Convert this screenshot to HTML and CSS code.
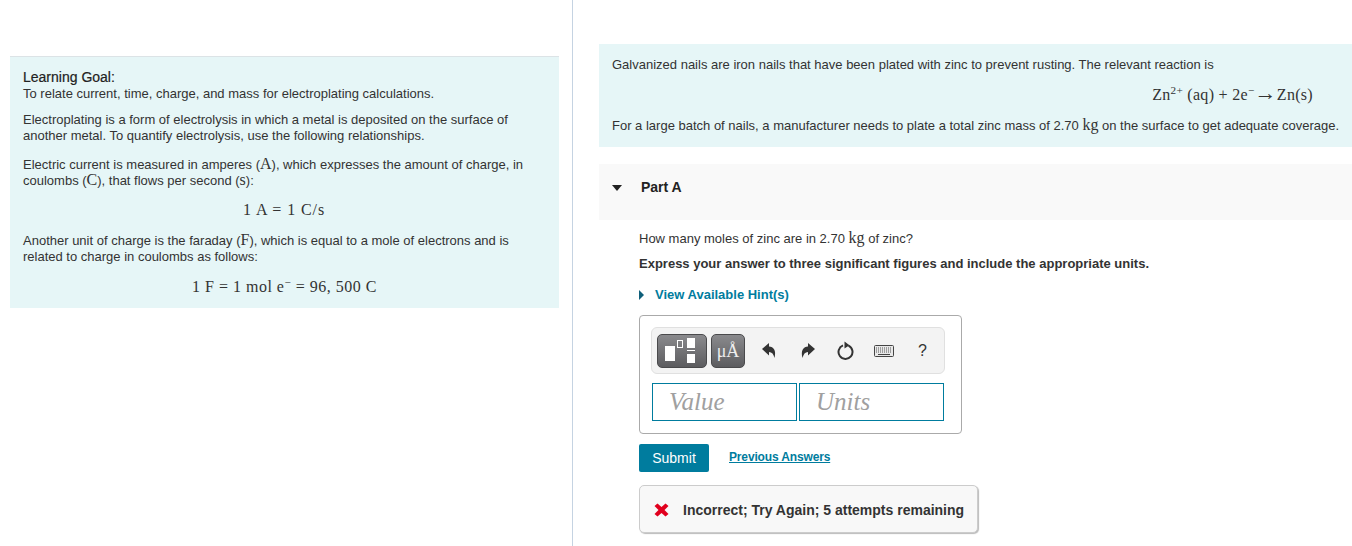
FILE: index.html
```html
<!DOCTYPE html>
<html lang="en">

<head>
    <meta charset="UTF-8">
    <title>Learning Goal</title>
    <link rel="stylesheet" href="styles.css">
</head>

<body>
    <div class="left">
        <div class="goal">
            <p class="first"><b class="goal-title">Learning Goal:</b><br>To relate current, time, charge, and mass for electroplating calculations.</p>
            <p>Electroplating is a form of electrolysis in which a metal is deposited on the surface of<br>another metal. To quantify electrolysis, use the following relationships.</p>
            <p class="current">Electric current is measured in amperes (<span class="m">A</span>), which expresses the amount of charge, in<br>coulombs (<span class="m">C</span>), that flows per second (<span class="m">s</span>):</p>
            <div class="eq eq-a"><span class="m">1 A = 1 C/s</span></div>
            <p class="faraday">Another unit of charge is the faraday (<span class="m">F</span>), which is equal to a mole of electrons and is<br>related to charge in coulombs as follows:</p>
            <div class="eq eq-f"><span class="m">1 F = 1 mol e<sup>−</sup> = 96, 500 C</span></div>
        </div>
    </div>

    <div class="right">
        <div class="intro">
            <p>Galvanized nails are iron nails that have been plated with zinc to prevent rusting. The relevant reaction is</p>
            <div class="reaction"><span class="m">Zn<sup>2+</sup> (aq) + 2e<sup>−</sup><span class="rarr">→</span>Zn(s)</span></div>
            <p>For a large batch of nails, a manufacturer needs to plate a total zinc mass of 2.70 <span class="m">kg</span> on the surface to get adequate coverage.</p>
        </div>

        <div class="part-head">
            <span class="arrow-down"></span>
            <b>Part A</b>
        </div>

        <div class="part-body">
            <p class="question">How many moles of zinc are in 2.70 <span class="m">kg</span> of zinc?</p>
            <p class="express">Express your answer to three significant figures and include the appropriate units.</p>
            <a class="hints" href="#"><span class="arrow-right"></span>View Available Hint(s)</a>

            <div class="answer">
                <div class="toolbar">
                    <span class="tpl tpl-frac">
                        <svg width="48" height="32" viewBox="0 0 48 32">
                            <rect x="7" y="11" width="10" height="15" fill="#fff"/>
                            <rect x="19.5" y="5.5" width="5" height="7" fill="none" stroke="#fff"/>
                            <rect x="29" y="3" width="8" height="10" fill="#fff"/>
                            <rect x="29" y="15" width="8" height="1" fill="#fff"/>
                            <rect x="29" y="19" width="8" height="9" fill="#fff"/>
                        </svg>
                    </span>
                    <span class="tpl tpl-unit">μÅ</span>
                    <svg class="tool tool-undo" width="16" height="18" viewBox="0 0 16 18">
                        <path d="M1 7 L8 1 V4.5 C12.5 4.5 15.5 8.5 13.5 16 C12.5 12 11 10 8 10 V13.5 Z" fill="#333"/>
                    </svg>
                    <svg class="tool tool-redo" width="16" height="18" viewBox="0 0 16 18">
                        <path d="M15 7 L8 1 V4.5 C3.5 4.5 0.5 8.5 2.5 16 C3.5 12 5 10 8 10 V13.5 Z" fill="#333"/>
                    </svg>
                    <svg class="tool tool-reset" width="18" height="20" viewBox="0 0 18 20">
                        <path d="M11.5 4.6 A7 7 0 1 1 6 4.4" fill="none" stroke="#333" stroke-width="2"/>
                        <path d="M7.5 0.5 L12.5 4.2 L7.5 7.5 Z" fill="#333"/>
                    </svg>
                    <svg class="tool tool-keys" width="20" height="12" viewBox="0 0 20 12">
                        <rect x="0.5" y="0.5" width="19" height="11" rx="1" fill="#e8e8e8" stroke="#444"/>
                        <path d="M2 3 H18 M2 5 H18 M2 7 H18" stroke="#555" stroke-dasharray="1 1"/>
                        <path d="M4 9.5 H16" stroke="#444"/>
                    </svg>
                    <span class="tool-help">?</span>
                </div>
                <div class="inputs">
                    <div class="field">Value</div>
                    <div class="field">Units</div>
                </div>
            </div>

            <div class="actions">
                <a class="submit" href="#">Submit</a>
                <a class="prev" href="#">Previous Answers</a>
            </div>

            <div class="feedback">
                <svg width="15" height="14" viewBox="0 0 15 14">
                    <path d="M3.5 0.5 L7.5 4 L11.5 0.5 L14.5 3 L10.5 7 L14.5 11 L11.5 13.5 L7.5 10 L3.5 13.5 L0.5 11 L4.5 7 L0.5 3 Z" fill="#e1001e"/>
                </svg>
                <span>Incorrect; Try Again; 5 attempts remaining</span>
            </div>
        </div>
    </div>
</body>

</html>
```

FILE: styles.css
```css
* {
    margin: 0;
    padding: 0;
    box-sizing: border-box;
}

html,
body {
    height: 546px;
    overflow: hidden;
}

body {
    display: flex;
    font-family: "Liberation Sans", Arial, sans-serif;
    font-size: 13px;
    line-height: 16px;
    color: #333;
    background: #fff;
}

sup {
    font-size: 70%;
    line-height: 0;
}

.m {
    font-family: "Liberation Serif", "Times New Roman", serif;
    font-size: 16px;
    line-height: 0;
}

.left {
    width: 573px;
    flex: none;
    height: 546px;
    padding: 56px 13px 0 10px;
    border-right: 1px solid #c5d3e2;
}

.goal {
    height: 252px;
    padding: 13px 13px 0;
    background: #e6f6f7;
    border-top: 1px solid #dce3e6;
}

.goal p {
    margin-top: 10px;
}

.goal p.first {
    margin-top: 0;
}

.goal p.current {
    margin-top: 13px;
}

.goal p.faraday {
    margin-top: 14px;
}

.goal-title {
    font-size: 14px;
    line-height: 0;
    font-weight: normal;
    color: #222;
    -webkit-text-stroke: 0.2px #222;
}

.eq {
    text-align: center;
}

.eq-a {
    margin-top: 14px;
    padding-right: 1px;
    letter-spacing: 0.9px;
}

.eq-f {
    margin-top: 15px;
    letter-spacing: 0.5px;
}

.right {
    flex: 1;
    min-width: 0;
    padding: 44px 0 0 26px;
}

.intro {
    height: 103px;
    padding: 13px 0 0 13px;
    background: #e6f6f7;
    white-space: nowrap;
}

.reaction {
    margin-top: 12px;
    padding-right: 39px;
    text-align: right;
    height: 22px;
    line-height: 22px;
    letter-spacing: 0.3px;
}

.rarr {
    font-size: 22px;
}

.reaction+p {
    margin-top: 11px;
}

.part-head {
    display: flex;
    align-items: flex-start;
    height: 56px;
    margin-top: 17px;
    padding: 15px 0 0 13px;
    background: #f9f9f9;
    font-size: 14px;
}

.part-head b {
    color: #222;
    margin-left: 19px;
}

.arrow-down {
    width: 0;
    height: 0;
    margin-top: 6px;
    border-left: 5px solid transparent;
    border-right: 5px solid transparent;
    border-top: 6px solid #222;
}

.part-body {
    padding: 11px 0 0 40px;
}

.express {
    margin-top: 9px;
    font-weight: bold;
    color: #333;
}

.hints {
    display: flex;
    align-items: center;
    margin-top: 15px;
    font-weight: bold;
    color: #007c9e;
    text-decoration: none;
}

.arrow-right {
    width: 0;
    height: 0;
    margin-right: 11px;
    border-top: 5px solid transparent;
    border-bottom: 5px solid transparent;
    border-left: 5px solid #0f5f7a;
}

.answer {
    width: 323px;
    height: 119px;
    margin-top: 12px;
    padding: 11px 0 0 11px;
    border: 1px solid #aaa;
    border-radius: 4px;
}

.toolbar {
    display: flex;
    align-items: center;
    width: 294px;
    height: 47px;
    padding-left: 5px;
    background: #f3f3f3;
    border: 1px solid #e0e0e0;
    border-radius: 6px;
}

.tpl {
    display: flex;
    align-items: center;
    justify-content: center;
    height: 34px;
    background: linear-gradient(#8a8a8d, #5c5c5f);
    border: 1px solid #4a4a4c;
    border-radius: 5px;
}

.tpl-frac {
    width: 50px;
}

.tpl-unit {
    width: 34px;
    margin-left: 4px;
    color: #eee;
    font-family: "Liberation Serif", serif;
    font-size: 18px;
}

.tool {
    flex: none;
}

.tool-undo {
    margin-left: 16px;
}

.tool-redo {
    margin-left: 23px;
}

.tool-reset {
    margin-left: 21px;
}

.tool-keys {
    margin-left: 19px;
}

.tool-help {
    margin-left: 24px;
    font-size: 16px;
    color: #333;
}

.inputs {
    display: flex;
    gap: 2px;
    margin: 9px 0 0 1px;
}

.field {
    width: 145px;
    height: 38px;
    padding-left: 16px;
    border: 1px solid #007c9e;
    font-family: "Liberation Serif", serif;
    font-style: italic;
    font-size: 25px;
    line-height: 35px;
    color: #a0a0a0;
}

.actions {
    display: flex;
    align-items: flex-start;
    margin-top: 10px;
}

.submit {
    width: 70px;
    height: 28px;
    background: #007c9e;
    border-radius: 2px;
    color: #fff;
    font-size: 14px;
    line-height: 28px;
    text-align: center;
    text-decoration: none;
}

.prev {
    margin: 5px 0 0 20px;
    font-size: 12px;
    font-weight: bold;
    letter-spacing: -0.15px;
    color: #007c9e;
}

.feedback {
    display: flex;
    align-items: center;
    width: 339px;
    height: 48px;
    margin-top: 13px;
    padding: 1px 0 0 14px;
    background: #f8f8f8;
    border: 1px solid #ccc;
    border-radius: 5px;
    box-shadow: 1px 1px 1px #bbb;
    font-weight: bold;
    font-size: 14px;
    color: #333;
}

.feedback span {
    margin-left: 14px;
}
```
